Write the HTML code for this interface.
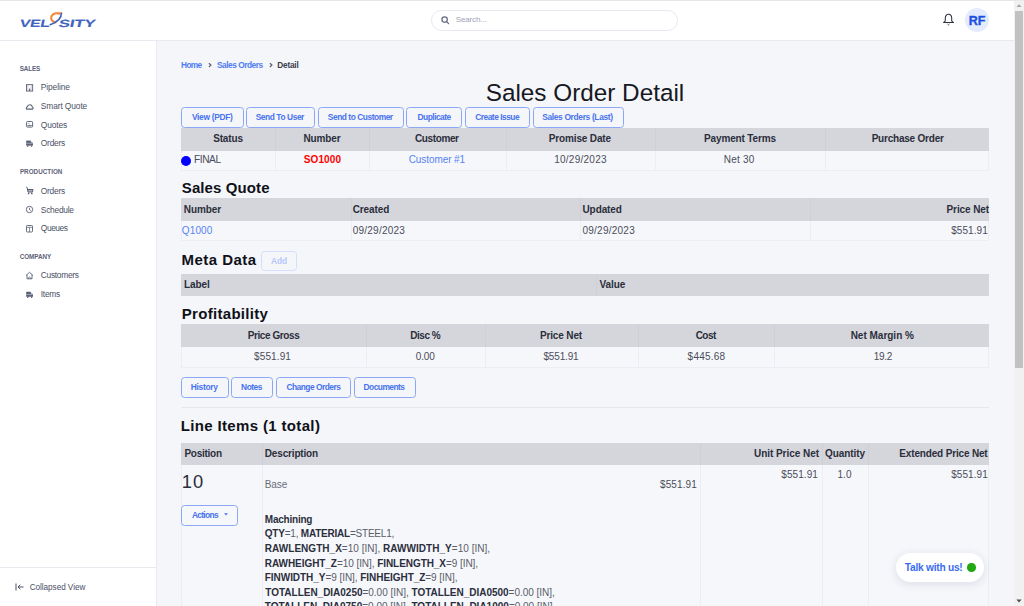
<!DOCTYPE html>
<html><head><meta charset="utf-8"><style>
html,body{margin:0;padding:0;width:1024px;height:606px;overflow:hidden;background:#f5f6fa}
body{position:relative;font-family:"Liberation Sans",sans-serif}
.t{position:absolute;white-space:pre}
.r{position:absolute}
b{font-weight:700}
</style></head><body>
<div class="r" style="left:0px;top:0px;width:1024px;height:606px;background:#f5f6fa"></div>
<div class="r" style="left:0px;top:0px;width:1014px;height:41px;background:#fff;border-bottom:1px solid #e9eaf0;box-sizing:border-box"></div>
<div class="r" style="left:0px;top:0px;width:1024px;height:1px;background:#e6e6e6"></div>
<div class="r" style="left:0px;top:41px;width:157px;height:565px;background:#fff;border-right:1px solid #eaebf1;box-sizing:border-box"></div>
<div class="r" style="left:0px;top:567px;width:156px;height:1px;background:#e9eaf0"></div>
<div class="r" style="left:1014px;top:0px;width:10px;height:606px;background:#f1f1f1"></div>
<div class="r" style="left:1015px;top:11px;width:8px;height:357px;background:#c1c1c1"></div>
<div class="r" style="left:1014px;top:0px;width:10px;height:1px;background:#e8e8e8"></div>
<svg class="r" style="left:1014px;top:0" width="10" height="606"><path d="M2.5 7 L5 4.3 L7.5 7 Z" fill="#a3a3a3"/><path d="M2.4 599.6 L5 602.5 L7.6 599.6 Z" fill="#505050"/></svg>
<svg class="r" style="left:0;top:0" width="110" height="40" viewBox="0 0 110 40">
<g fill="#3f64be" stroke="#3f64be" stroke-width="0.15" font-family="Liberation Sans" font-weight="700" font-size="10.4" transform="skewX(-12)">
<text x="24.8" y="26.6" textLength="30.2" lengthAdjust="spacingAndGlyphs">VEL</text>
<text x="63.9" y="26.6" textLength="36.6" lengthAdjust="spacingAndGlyphs">SITY</text>
</g>
<path d="M60.2 14.2 A5.5 4.5 -10 1 0 56.2 22.3" fill="none" stroke="#f5893a" stroke-width="2.2"/>
<path d="M55.5 13.2 C 58 12, 61.5 12, 62.6 13.3" fill="none" stroke="#f8a96a" stroke-width="1" stroke-linecap="round"/>
<path d="M61.3 13.2 C 61.6 17.5, 58 21.8, 50.2 24.7" fill="none" stroke="#3f64be" stroke-width="1.6" stroke-linecap="round"/>
</svg>
<div class="r" style="left:431px;top:9.5px;width:247px;height:21.0px;border:1px solid #e6e8ef;border-radius:11px;background:#fff;box-sizing:border-box"></div>
<svg class="r" style="left:440px;top:15px" width="10" height="10" viewBox="0 0 10 10"><circle cx="4.6" cy="4.6" r="2.7" fill="none" stroke="#646a82" stroke-width="1.25"/><path d="M6.6 6.6 L8.6 8.6" stroke="#646a82" stroke-width="1.3" stroke-linecap="round"/></svg>
<div class="t" style="left:455.7px;top:15.83px;font-size:8px;line-height:8px;font-weight:400;color:#9ea3b8;letter-spacing:-0.125px;">Search...</div>
<svg class="r" style="left:942px;top:13px" width="13" height="14" viewBox="0 0 13 14"><path d="M6.5 1.3 C4.5 1.3 3.3 2.9 3.3 5 L3.3 7.4 C3.3 8.3 2.6 8.9 1.5 9.4 L11.5 9.4 C10.4 8.9 9.7 8.3 9.7 7.4 L9.7 5 C9.7 2.9 8.5 1.3 6.5 1.3 Z" fill="none" stroke="#2e3140" stroke-width="1.05" stroke-linejoin="round"/><path d="M5.6 11.1 L6.5 11.9 L7.4 11.1" fill="none" stroke="#2e3140" stroke-width="1"/></svg>
<div class="r" style="left:965px;top:8px;width:24px;height:24px;background:#e3ebfd;border-radius:50%"></div>
<div class="t" style="left:677px;width:600px;text-align:center;top:14.72px;font-size:12.5px;line-height:12.5px;font-weight:700;color:#1b4fe3;-webkit-text-stroke:0.35px #1b4fe3;">RF</div>
<div class="t" style="left:19.8px;top:65.67px;font-size:6.3px;line-height:6.3px;font-weight:700;color:#5d6277;letter-spacing:-0.16px;">SALES</div>
<div class="t" style="left:19.9px;top:169.17px;font-size:6.3px;line-height:6.3px;font-weight:700;color:#5d6277;letter-spacing:0.02px;">PRODUCTION</div>
<div class="t" style="left:19.8px;top:254.07px;font-size:6.3px;line-height:6.3px;font-weight:700;color:#5d6277;letter-spacing:-0.06px;">COMPANY</div>
<div class="t" style="left:40.8px;top:83.29px;font-size:8.4px;line-height:8.4px;font-weight:400;color:#4b5066;letter-spacing:-0.1px;">Pipeline</div>
<div class="t" style="left:40.8px;top:101.99px;font-size:8.4px;line-height:8.4px;font-weight:400;color:#4b5066;letter-spacing:-0.1px;">Smart Quote</div>
<div class="t" style="left:40.8px;top:120.69px;font-size:8.4px;line-height:8.4px;font-weight:400;color:#4b5066;letter-spacing:-0.1px;">Quotes</div>
<div class="t" style="left:40.8px;top:139.19px;font-size:8.4px;line-height:8.4px;font-weight:400;color:#4b5066;letter-spacing:-0.236px;">Orders</div>
<div class="t" style="left:40.8px;top:186.89px;font-size:8.4px;line-height:8.4px;font-weight:400;color:#4b5066;letter-spacing:-0.244px;">Orders</div>
<div class="t" style="left:40.8px;top:205.59px;font-size:8.4px;line-height:8.4px;font-weight:400;color:#4b5066;letter-spacing:-0.249px;">Schedule</div>
<div class="t" style="left:40.8px;top:224.19px;font-size:8.4px;line-height:8.4px;font-weight:400;color:#4b5066;letter-spacing:-0.42px;">Queues</div>
<div class="t" style="left:40.8px;top:271.49px;font-size:8.4px;line-height:8.4px;font-weight:400;color:#4b5066;letter-spacing:-0.29px;">Customers</div>
<div class="t" style="left:40.8px;top:290.09px;font-size:8.4px;line-height:8.4px;font-weight:400;color:#4b5066;letter-spacing:-0.28px;">Items</div>
<div class="t" style="left:29.7px;top:583.56px;font-size:8.2px;line-height:8.2px;font-weight:400;color:#4b5066;letter-spacing:-0.05px;">Collapsed View</div>
<svg class="r" style="left:15px;top:583px" width="10" height="8" viewBox="0 0 10 8"><path d="M1 0.5 V7.5 M3 4 H8.5 M3 4 L5.3 1.8 M3 4 L5.3 6.2" fill="none" stroke="#4b5066" stroke-width="1"/></svg>
<svg class="r" style="left:25px;top:83.5px" width="9" height="9" viewBox="0 0 9 9"><rect x="1.45" y="0.65" width="6.2" height="6.4" fill="none" stroke="#5a5f74" stroke-width="0.9"/><path d="M2.9 1 V6.8 M6.2 1 V6.8" stroke="#5a5f74" stroke-width="0.5" opacity="0.6"/><rect x="4" y="4.6" width="1.2" height="2.3" fill="#5a5f74"/></svg>
<svg class="r" style="left:25px;top:101.5px" width="9" height="9" viewBox="0 0 9 9"><path d="M1.7 7.1 H7.5 C8.3 7.1 8.4 5.3 7.3 5 C7.1 3.4 5.9 2.6 4.6 2.8 C3.4 2.9 2.6 3.7 2.4 4.7 C1.1 5 0.9 7.1 1.7 7.1 Z" fill="none" stroke="#5a5f74" stroke-width="1.05"/></svg>
<svg class="r" style="left:25px;top:120.3px" width="9" height="9" viewBox="0 0 9 9"><rect x="1.6" y="1.5" width="6" height="5.6" rx="0.9" fill="none" stroke="#5a5f74" stroke-width="0.95"/><path d="M2.5 5.6 H6.7" stroke="#5a5f74" stroke-width="0.9"/><path d="M3.3 3 L4.6 4.3" stroke="#5a5f74" stroke-width="0.7"/></svg>
<svg class="r" style="left:25px;top:139px" width="9" height="9" viewBox="0 0 9 9"><rect x="1.2" y="1.6" width="4.7" height="5" fill="#5a5f74"/><path d="M5.9 3.2 H7.2 L8 4.6 V6.6 H5.9 Z" fill="#5a5f74"/><path d="M1.2 4.3 H7.5" stroke="#cdd1dc" stroke-width="0.6"/><circle cx="2.8" cy="7.1" r="0.8" fill="#5a5f74"/><circle cx="6.6" cy="7.1" r="0.8" fill="#5a5f74"/></svg>
<svg class="r" style="left:25px;top:186px" width="9" height="9" viewBox="0 0 9 9"><path d="M1.2 1 L2.2 1.6 L3 6 H7.5 L8 3.5 H2.6" fill="none" stroke="#5a5f74" stroke-width="1"/><path d="M2.8 3.5 H7.8 L7.4 5.8 H3.2 Z" fill="#5a5f74" opacity="0.5"/><circle cx="3.6" cy="7.4" r="0.85" fill="#5a5f74"/><circle cx="6.8" cy="7.4" r="0.85" fill="#5a5f74"/></svg>
<svg class="r" style="left:25px;top:205px" width="9" height="9" viewBox="0 0 9 9"><circle cx="4.5" cy="4.5" r="3.2" fill="none" stroke="#5a5f74" stroke-width="0.9"/><path d="M4.5 2.8 V4.7 L5.8 5.6" fill="none" stroke="#5a5f74" stroke-width="0.8"/></svg>
<svg class="r" style="left:25px;top:223.5px" width="9" height="9" viewBox="0 0 9 9"><rect x="1.5" y="1.5" width="6" height="6.5" rx="0.8" fill="none" stroke="#5a5f74" stroke-width="0.9"/><path d="M1.5 3.3 H7.5 M4.5 3.3 V8" stroke="#5a5f74" stroke-width="0.7"/></svg>
<svg class="r" style="left:25px;top:271px" width="9" height="9" viewBox="0 0 9 9"><path d="M1 4.5 L4.5 1.3 L8 4.5 M2 3.8 V7.8 H7 V3.8" fill="none" stroke="#5a5f74" stroke-width="0.9"/><path d="M3.3 7.8 C3.3 5.5 5.7 5.5 5.7 7.8" fill="none" stroke="#5a5f74" stroke-width="0.8"/></svg>
<svg class="r" style="left:25px;top:289.5px" width="9" height="9" viewBox="0 0 9 9"><rect x="1.2" y="1.8" width="4.7" height="5" fill="#5a5f74"/><path d="M5.9 3.4 H7.2 L8 4.8 V6.8 H5.9 Z" fill="#5a5f74"/><path d="M1.2 4.5 H7.5" stroke="#cdd1dc" stroke-width="0.6"/><circle cx="2.8" cy="7.2" r="0.8" fill="#5a5f74"/><circle cx="6.6" cy="7.2" r="0.8" fill="#5a5f74"/></svg>
<div class="t" style="left:181.1px;top:60.67px;font-size:8.3px;line-height:8.3px;font-weight:700;color:#4f7cf3;letter-spacing:-0.676px;">Home</div>
<div class="t" style="left:216.9px;top:60.67px;font-size:8.3px;line-height:8.3px;font-weight:700;color:#4f7cf3;letter-spacing:-0.453px;">Sales Orders</div>
<div class="t" style="left:277.2px;top:60.67px;font-size:8.3px;line-height:8.3px;font-weight:700;color:#3b3e4d;letter-spacing:-0.2px;">Detail</div>
<svg class="r" style="left:207.8px;top:62px" width="4" height="6" viewBox="0 0 4 6"><path d="M0.9 1.2 L2.9 3.1 L0.9 5" fill="none" stroke="#5d6173" stroke-width="1.25"/></svg>
<svg class="r" style="left:268.7px;top:62px" width="4" height="6" viewBox="0 0 4 6"><path d="M0.9 1.2 L2.9 3.1 L0.9 5" fill="none" stroke="#5d6173" stroke-width="1.25"/></svg>
<div class="t" style="left:285px;width:600px;text-align:center;top:80.83px;font-size:24.3px;line-height:24.3px;font-weight:400;color:#171922;">Sales Order Detail</div>
<div class="r" style="left:181px;top:107px;width:62.5px;height:20.5px;border:1px solid #8aa8f7;border-radius:3.5px;box-sizing:border-box"></div>
<div class="t" style="left:-87.75px;width:600px;text-align:center;top:112.89px;font-size:8.4px;line-height:8.4px;font-weight:700;color:#4773ed;letter-spacing:-0.3px;">View (PDF)</div>
<div class="r" style="left:245.6px;top:107px;width:69.4px;height:20.5px;border:1px solid #8aa8f7;border-radius:3.5px;box-sizing:border-box"></div>
<div class="t" style="left:-20.189999999999998px;width:600px;text-align:center;top:112.89px;font-size:8.4px;line-height:8.4px;font-weight:700;color:#4773ed;letter-spacing:-0.424px;">Send To User</div>
<div class="r" style="left:317.5px;top:107px;width:86.5px;height:20.5px;border:1px solid #8aa8f7;border-radius:3.5px;box-sizing:border-box"></div>
<div class="t" style="left:60.25px;width:600px;text-align:center;top:112.89px;font-size:8.4px;line-height:8.4px;font-weight:700;color:#4773ed;letter-spacing:-0.455px;">Send to Customer</div>
<div class="r" style="left:406.3px;top:107px;width:55.69999999999999px;height:20.5px;border:1px solid #8aa8f7;border-radius:3.5px;box-sizing:border-box"></div>
<div class="t" style="left:134.14999999999998px;width:600px;text-align:center;top:112.89px;font-size:8.4px;line-height:8.4px;font-weight:700;color:#4773ed;letter-spacing:-0.5px;">Duplicate</div>
<div class="r" style="left:464.6px;top:107px;width:65.10000000000002px;height:20.5px;border:1px solid #8aa8f7;border-radius:3.5px;box-sizing:border-box"></div>
<div class="t" style="left:197.14999999999998px;width:600px;text-align:center;top:112.89px;font-size:8.4px;line-height:8.4px;font-weight:700;color:#4773ed;letter-spacing:-0.482px;">Create Issue</div>
<div class="r" style="left:532.5px;top:107px;width:91.0px;height:20.5px;border:1px solid #8aa8f7;border-radius:3.5px;box-sizing:border-box"></div>
<div class="t" style="left:277.47px;width:600px;text-align:center;top:112.89px;font-size:8.4px;line-height:8.4px;font-weight:700;color:#4773ed;letter-spacing:-0.331px;">Sales Orders (Last)</div>
<div class="r" style="left:181px;top:128px;width:808px;height:22.5px;background:#d5d6db"></div>
<div class="r" style="left:275px;top:128px;width:1px;height:22.5px;background:#cfd0d6"></div>
<div class="r" style="left:369px;top:128px;width:1px;height:22.5px;background:#cfd0d6"></div>
<div class="r" style="left:506px;top:128px;width:1px;height:22.5px;background:#cfd0d6"></div>
<div class="r" style="left:655px;top:128px;width:1px;height:22.5px;background:#cfd0d6"></div>
<div class="r" style="left:825px;top:128px;width:1px;height:22.5px;background:#cfd0d6"></div>
<div class="r" style="left:181px;top:150.5px;width:808px;height:20.0px;background:#f6f7fb;border:1px solid #eceef3;border-top:none;box-sizing:border-box"></div>
<div class="r" style="left:275px;top:150.5px;width:1px;height:20.0px;background:#eceef3"></div>
<div class="r" style="left:369px;top:150.5px;width:1px;height:20.0px;background:#eceef3"></div>
<div class="r" style="left:506px;top:150.5px;width:1px;height:20.0px;background:#eceef3"></div>
<div class="r" style="left:655px;top:150.5px;width:1px;height:20.0px;background:#eceef3"></div>
<div class="r" style="left:825px;top:150.5px;width:1px;height:20.0px;background:#eceef3"></div>
<div class="t" style="left:-72.0px;width:600px;text-align:center;top:133.73px;font-size:10px;line-height:10px;font-weight:700;color:#2b2e3c;letter-spacing:-0.15px;">Status</div>
<div class="t" style="left:22.0px;width:600px;text-align:center;top:133.73px;font-size:10px;line-height:10px;font-weight:700;color:#2b2e3c;letter-spacing:-0.15px;">Number</div>
<div class="t" style="left:136.8px;width:600px;text-align:center;top:133.73px;font-size:10px;line-height:10px;font-weight:700;color:#2b2e3c;letter-spacing:-0.39px;">Customer</div>
<div class="t" style="left:279.9px;width:600px;text-align:center;top:133.73px;font-size:10px;line-height:10px;font-weight:700;color:#2b2e3c;letter-spacing:-0.15px;">Promise Date</div>
<div class="t" style="left:440.0px;width:600px;text-align:center;top:133.73px;font-size:10px;line-height:10px;font-weight:700;color:#2b2e3c;letter-spacing:-0.15px;">Payment Terms</div>
<div class="t" style="left:607.68px;width:600px;text-align:center;top:133.73px;font-size:10px;line-height:10px;font-weight:700;color:#2b2e3c;letter-spacing:-0.218px;">Purchase Order</div>
<div class="r" style="left:181px;top:155.8px;width:10px;height:10.0px;background:#0000ff;border-radius:50%"></div>
<div class="t" style="left:194.1px;top:154.76px;font-size:10.2px;line-height:10.2px;font-weight:400;color:#4a4d5a;letter-spacing:-0.48px;">FINAL</div>
<div class="t" style="left:22.480000000000018px;width:600px;text-align:center;top:154.83px;font-size:10px;line-height:10px;font-weight:700;color:#ff0000;letter-spacing:0.124px;">SO1000</div>
<div class="t" style="left:136.89999999999998px;width:600px;text-align:center;top:154.83px;font-size:10px;line-height:10px;font-weight:400;color:#5783f2;letter-spacing:-0.084px;">Customer #1</div>
<div class="t" style="left:280.5px;width:600px;text-align:center;top:154.83px;font-size:10px;line-height:10px;font-weight:400;color:#4a4d5a;letter-spacing:0.259px;">10/29/2023</div>
<div class="t" style="left:439.14px;width:600px;text-align:center;top:154.83px;font-size:10px;line-height:10px;font-weight:400;color:#4a4d5a;letter-spacing:0.188px;">Net 30</div>
<div class="t" style="left:181.8px;top:180.40px;font-size:15px;line-height:15px;font-weight:700;color:#0f1118;letter-spacing:0.1px;">Sales Quote</div>
<div class="r" style="left:181px;top:198px;width:808px;height:22.5px;background:#d5d6db"></div>
<div class="r" style="left:350.5px;top:198px;width:1.0px;height:22.5px;background:#cfd0d6"></div>
<div class="r" style="left:580px;top:198px;width:1px;height:22.5px;background:#cfd0d6"></div>
<div class="r" style="left:810px;top:198px;width:1px;height:22.5px;background:#cfd0d6"></div>
<div class="r" style="left:181px;top:220.5px;width:808px;height:20.0px;background:#f6f7fb;border:1px solid #eceef3;border-top:none;box-sizing:border-box"></div>
<div class="r" style="left:350.5px;top:220.5px;width:1.0px;height:20.0px;background:#eceef3"></div>
<div class="r" style="left:580px;top:220.5px;width:1px;height:20.0px;background:#eceef3"></div>
<div class="r" style="left:810px;top:220.5px;width:1px;height:20.0px;background:#eceef3"></div>
<div class="t" style="left:183.8px;top:204.53px;font-size:10px;line-height:10px;font-weight:700;color:#2b2e3c;letter-spacing:-0.1px;">Number</div>
<div class="t" style="left:352.7px;top:204.53px;font-size:10px;line-height:10px;font-weight:700;color:#2b2e3c;letter-spacing:-0.1px;">Created</div>
<div class="t" style="left:582.5px;top:204.53px;font-size:10px;line-height:10px;font-weight:700;color:#2b2e3c;letter-spacing:-0.1px;">Updated</div>
<div class="t" style="right:35px;top:204.53px;font-size:10px;line-height:10px;font-weight:700;color:#2b2e3c;letter-spacing:-0.1px;">Price Net</div>
<div class="t" style="left:181.8px;top:225.63px;font-size:10px;line-height:10px;font-weight:400;color:#5783f2;letter-spacing:0.14px;">Q1000</div>
<div class="t" style="left:352.7px;top:225.63px;font-size:10px;line-height:10px;font-weight:400;color:#4a4d5a;letter-spacing:0.241px;">09/29/2023</div>
<div class="t" style="left:582.5px;top:225.63px;font-size:10px;line-height:10px;font-weight:400;color:#4a4d5a;letter-spacing:0.241px;">09/29/2023</div>
<div class="t" style="right:36.210000000000036px;top:225.63px;font-size:10px;line-height:10px;font-weight:400;color:#4a4d5a;letter-spacing:0.064px;">$551.91</div>
<div class="t" style="left:181.6px;top:252.40px;font-size:15px;line-height:15px;font-weight:700;color:#0f1118;letter-spacing:0.44px;">Meta Data</div>
<div class="r" style="left:261.4px;top:251px;width:35.200000000000045px;height:20px;border:1px solid #d3dffc;border-radius:3.5px;box-sizing:border-box"></div>
<div class="t" style="left:-21px;width:600px;text-align:center;top:256.59px;font-size:8.4px;line-height:8.4px;font-weight:700;color:#b5c7f8;letter-spacing:-0.1px;">Add</div>
<div class="r" style="left:181px;top:273.5px;width:808px;height:22.69999999999999px;background:#d5d6db"></div>
<div class="r" style="left:596px;top:273.5px;width:1px;height:22.69999999999999px;background:#cfd0d6"></div>
<div class="t" style="left:184.1px;top:280.13px;font-size:10px;line-height:10px;font-weight:700;color:#2b2e3c;letter-spacing:-0.1px;">Label</div>
<div class="t" style="left:599.5px;top:280.13px;font-size:10px;line-height:10px;font-weight:700;color:#2b2e3c;letter-spacing:-0.1px;">Value</div>
<div class="t" style="left:181.8px;top:306.40px;font-size:15px;line-height:15px;font-weight:700;color:#0f1118;letter-spacing:0.3px;">Profitability</div>
<div class="r" style="left:181px;top:324.4px;width:808px;height:22.400000000000034px;background:#d5d6db"></div>
<div class="r" style="left:366px;top:324.4px;width:1px;height:22.400000000000034px;background:#cfd0d6"></div>
<div class="r" style="left:484.5px;top:324.4px;width:1.0px;height:22.400000000000034px;background:#cfd0d6"></div>
<div class="r" style="left:637.5px;top:324.4px;width:1.0px;height:22.400000000000034px;background:#cfd0d6"></div>
<div class="r" style="left:774px;top:324.4px;width:1px;height:22.400000000000034px;background:#cfd0d6"></div>
<div class="r" style="left:181px;top:346.8px;width:808px;height:21.0px;background:#f6f7fb;border:1px solid #eceef3;border-top:none;box-sizing:border-box"></div>
<div class="r" style="left:366px;top:346.8px;width:1px;height:21.0px;background:#eceef3"></div>
<div class="r" style="left:484.5px;top:346.8px;width:1.0px;height:21.0px;background:#eceef3"></div>
<div class="r" style="left:637.5px;top:346.8px;width:1.0px;height:21.0px;background:#eceef3"></div>
<div class="r" style="left:774px;top:346.8px;width:1px;height:21.0px;background:#eceef3"></div>
<div class="t" style="left:-26.5px;width:600px;text-align:center;top:330.63px;font-size:10px;line-height:10px;font-weight:700;color:#2b2e3c;letter-spacing:-0.414px;">Price Gross</div>
<div class="t" style="left:-27.480000000000018px;width:600px;text-align:center;top:352.33px;font-size:10px;line-height:10px;font-weight:400;color:#4a4d5a;letter-spacing:0.103px;">$551.91</div>
<div class="t" style="left:125.25px;width:600px;text-align:center;top:330.63px;font-size:10px;line-height:10px;font-weight:700;color:#2b2e3c;letter-spacing:-0.438px;">Disc %</div>
<div class="t" style="left:125.25px;width:600px;text-align:center;top:352.33px;font-size:10px;line-height:10px;font-weight:400;color:#4a4d5a;letter-spacing:-0.15px;">0.00</div>
<div class="t" style="left:261.0px;width:600px;text-align:center;top:330.63px;font-size:10px;line-height:10px;font-weight:700;color:#2b2e3c;letter-spacing:-0.15px;">Price Net</div>
<div class="t" style="left:261.0px;width:600px;text-align:center;top:352.33px;font-size:10px;line-height:10px;font-weight:400;color:#4a4d5a;letter-spacing:-0.15px;">$551.91</div>
<div class="t" style="left:405.75px;width:600px;text-align:center;top:330.63px;font-size:10px;line-height:10px;font-weight:700;color:#2b2e3c;letter-spacing:-0.497px;">Cost</div>
<div class="t" style="left:406.5px;width:600px;text-align:center;top:352.33px;font-size:10px;line-height:10px;font-weight:400;color:#4a4d5a;letter-spacing:0.237px;">$445.68</div>
<div class="t" style="left:582.28px;width:600px;text-align:center;top:330.63px;font-size:10px;line-height:10px;font-weight:700;color:#2b2e3c;letter-spacing:-0.005px;">Net Margin %</div>
<div class="t" style="left:582.83px;width:600px;text-align:center;top:352.33px;font-size:10px;line-height:10px;font-weight:400;color:#4a4d5a;letter-spacing:-0.337px;">19.2</div>
<div class="r" style="left:180.6px;top:377.4px;width:48.099999999999994px;height:21.0px;border:1px solid #8aa8f7;border-radius:3.5px;box-sizing:border-box"></div>
<div class="t" style="left:-95.83000000000001px;width:600px;text-align:center;top:382.89px;font-size:8.4px;line-height:8.4px;font-weight:700;color:#4773ed;letter-spacing:-0.3px;">History</div>
<div class="r" style="left:231.2px;top:377.4px;width:41.5px;height:21.0px;border:1px solid #8aa8f7;border-radius:3.5px;box-sizing:border-box"></div>
<div class="t" style="left:-48.53px;width:600px;text-align:center;top:382.89px;font-size:8.4px;line-height:8.4px;font-weight:700;color:#4773ed;letter-spacing:-0.5px;">Notes</div>
<div class="r" style="left:275.6px;top:377.4px;width:75.69999999999999px;height:21.0px;border:1px solid #8aa8f7;border-radius:3.5px;box-sizing:border-box"></div>
<div class="t" style="left:13.449999999999989px;width:600px;text-align:center;top:382.89px;font-size:8.4px;line-height:8.4px;font-weight:700;color:#4773ed;letter-spacing:-0.5px;">Change Orders</div>
<div class="r" style="left:353.7px;top:377.4px;width:62.30000000000001px;height:21.0px;border:1px solid #8aa8f7;border-radius:3.5px;box-sizing:border-box"></div>
<div class="t" style="left:84.04000000000002px;width:600px;text-align:center;top:382.89px;font-size:8.4px;line-height:8.4px;font-weight:700;color:#4773ed;letter-spacing:-0.52px;">Documents</div>
<div class="r" style="left:181px;top:407px;width:808px;height:1px;background:#e6e8ee"></div>
<div class="t" style="left:180.65px;top:417.50px;font-size:15px;line-height:15px;font-weight:700;color:#0f1118;letter-spacing:0.354px;">Line Items (1 total)</div>
<div class="r" style="left:181px;top:443.1px;width:808px;height:22.299999999999955px;background:#d5d6db"></div>
<div class="r" style="left:261.7px;top:443.1px;width:1.0px;height:22.299999999999955px;background:#cfd0d6"></div>
<div class="r" style="left:700.2px;top:443.1px;width:1.0px;height:22.299999999999955px;background:#cfd0d6"></div>
<div class="r" style="left:821.8px;top:443.1px;width:1.0px;height:22.299999999999955px;background:#cfd0d6"></div>
<div class="r" style="left:868.1px;top:443.1px;width:1.0px;height:22.299999999999955px;background:#cfd0d6"></div>
<div class="r" style="left:181px;top:465.4px;width:808px;height:140.60000000000002px;background:#f6f7fb;border-left:1px solid #eceef3;border-right:1px solid #eceef3;box-sizing:border-box"></div>
<div class="r" style="left:261.7px;top:465.4px;width:1.0px;height:140.60000000000002px;background:#eceef3"></div>
<div class="r" style="left:700.2px;top:465.4px;width:1.0px;height:140.60000000000002px;background:#eceef3"></div>
<div class="r" style="left:821.8px;top:465.4px;width:1.0px;height:140.60000000000002px;background:#eceef3"></div>
<div class="r" style="left:868.1px;top:465.4px;width:1.0px;height:140.60000000000002px;background:#eceef3"></div>
<div class="t" style="left:184.4px;top:449.13px;font-size:10px;line-height:10px;font-weight:700;color:#2b2e3c;letter-spacing:-0.249px;">Position</div>
<div class="t" style="left:264.8px;top:449.13px;font-size:10px;line-height:10px;font-weight:700;color:#2b2e3c;letter-spacing:-0.164px;">Description</div>
<div class="t" style="right:205px;top:449.13px;font-size:10px;line-height:10px;font-weight:700;color:#2b2e3c;letter-spacing:-0.038px;">Unit Price Net</div>
<div class="t" style="left:545px;width:600px;text-align:center;top:449.13px;font-size:10px;line-height:10px;font-weight:700;color:#2b2e3c;letter-spacing:-0.1px;">Quantity</div>
<div class="t" style="right:36.49000000000001px;top:449.13px;font-size:10px;line-height:10px;font-weight:700;color:#2b2e3c;letter-spacing:-0.166px;">Extended Price Net</div>
<div class="t" style="left:181.84px;top:472.61px;font-size:18.3px;line-height:18.3px;font-weight:400;color:#2b2e3b;letter-spacing:1.04px;">10</div>
<div class="t" style="left:264.8px;top:479.93px;font-size:10px;line-height:10px;font-weight:400;color:#6a6d78;letter-spacing:-0.1px;">Base</div>
<div class="t" style="right:327px;top:479.83px;font-size:10px;line-height:10px;font-weight:400;color:#4a4d5a;letter-spacing:0.13px;">$551.91</div>
<div class="t" style="right:206px;top:470.13px;font-size:10px;line-height:10px;font-weight:400;color:#4a4d5a;letter-spacing:0.077px;">$551.91</div>
<div class="t" style="left:544.52px;width:600px;text-align:center;top:470.13px;font-size:10px;line-height:10px;font-weight:400;color:#4a4d5a;">1.0</div>
<div class="t" style="right:36.210000000000036px;top:470.13px;font-size:10px;line-height:10px;font-weight:400;color:#4a4d5a;letter-spacing:0.064px;">$551.91</div>
<div class="r" style="left:181.2px;top:505.4px;width:56.60000000000002px;height:21.0px;border:1px solid #8aa8f7;border-radius:3.5px;box-sizing:border-box"></div>
<div class="t" style="left:191.9px;top:510.69px;font-size:8.4px;line-height:8.4px;font-weight:700;color:#4773ed;letter-spacing:-0.673px;">Actions</div>
<svg class="r" style="left:223.5px;top:513px" width="4" height="3" viewBox="0 0 4 3"><path d="M0 0.3 H4 L2 2.5 Z" fill="#4773ed"/></svg>
<div class="t" style="left:264.8px;top:514.73px;font-size:10px;line-height:10px;font-weight:400;color:#5a5d69;letter-spacing:-0.22px;white-space:pre;"><b style="color:#2b2e3b">Machining</b></div>
<div class="t" style="left:264.8px;top:529.23px;font-size:10px;line-height:10px;font-weight:400;color:#5a5d69;letter-spacing:-0.22px;white-space:pre;"><b style="color:#2b2e3b">QTY</b><span style="color:#5a5d69">=1, </span><b style="color:#2b2e3b">MATERIAL</b><span style="color:#5a5d69">=STEEL1,</span></div>
<div class="t" style="left:264.8px;top:543.63px;font-size:10px;line-height:10px;font-weight:400;color:#5a5d69;letter-spacing:0.035px;white-space:pre;"><b style="color:#2b2e3b">RAWLENGTH_X</b><span style="color:#5a5d69">=10 [IN], </span><b style="color:#2b2e3b">RAWWIDTH_Y</b><span style="color:#5a5d69">=10 [IN],</span></div>
<div class="t" style="left:264.8px;top:558.53px;font-size:10px;line-height:10px;font-weight:400;color:#5a5d69;letter-spacing:-0.06px;white-space:pre;"><b style="color:#2b2e3b">RAWHEIGHT_Z</b><span style="color:#5a5d69">=10 [IN], </span><b style="color:#2b2e3b">FINLENGTH_X</b><span style="color:#5a5d69">=9 [IN],</span></div>
<div class="t" style="left:264.8px;top:573.03px;font-size:10px;line-height:10px;font-weight:400;color:#5a5d69;letter-spacing:-0.05px;white-space:pre;"><b style="color:#2b2e3b">FINWIDTH_Y</b><span style="color:#5a5d69">=9 [IN], </span><b style="color:#2b2e3b">FINHEIGHT_Z</b><span style="color:#5a5d69">=9 [IN],</span></div>
<div class="t" style="left:265.36px;top:587.63px;font-size:10px;line-height:10px;font-weight:400;color:#5a5d69;letter-spacing:-0.019px;white-space:pre;"><b style="color:#2b2e3b">TOTALLEN_DIA0250</b><span style="color:#5a5d69">=0.00 [IN], </span><b style="color:#2b2e3b">TOTALLEN_DIA0500</b><span style="color:#5a5d69">=0.00 [IN],</span></div>
<div class="t" style="left:264.8px;top:602.23px;font-size:10px;line-height:10px;font-weight:400;color:#5a5d69;white-space:pre;"><b style="color:#2b2e3b">TOTALLEN_DIA0750</b><span style="color:#5a5d69">=0.00 [IN], </span><b style="color:#2b2e3b">TOTALLEN_DIA1000</b><span style="color:#5a5d69">=0.00 [IN],</span></div>
<div class="r" style="left:896.2px;top:552.9px;width:87.5px;height:28.700000000000045px;background:#fff;border-radius:15px;box-shadow:0 2px 10px rgba(40,50,90,0.13)"></div>
<div class="t" style="left:904.8px;top:562.86px;font-size:10.2px;line-height:10.2px;font-weight:700;color:#3b6cf0;letter-spacing:-0.25px;">Talk with us!</div>
<div class="r" style="left:967px;top:563px;width:8.5px;height:8.5px;background:#21a812;border-radius:50%"></div>
</body></html>
